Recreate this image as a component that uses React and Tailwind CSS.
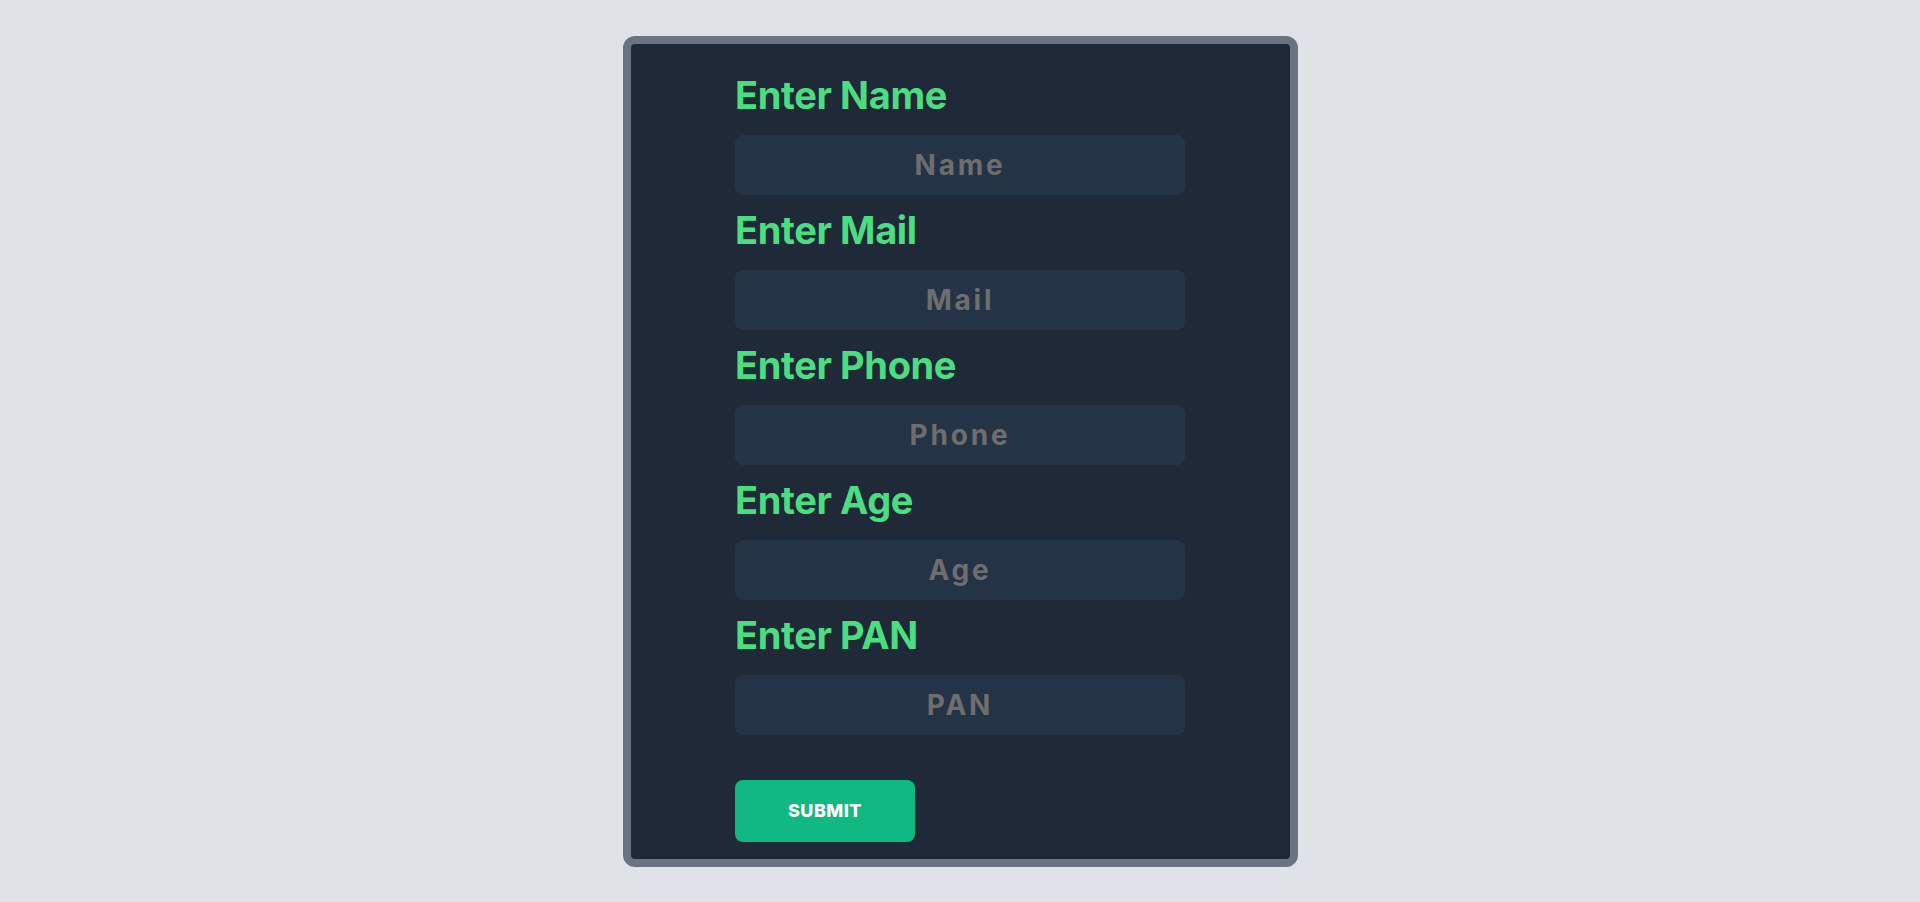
import React from "react";

const FIELDS = [
  { label: "Enter Name", placeholder: "Name" },
  { label: "Enter Mail", placeholder: "Mail" },
  { label: "Enter Phone", placeholder: "Phone" },
  { label: "Enter Age", placeholder: "Age" },
  { label: "Enter PAN", placeholder: "PAN" },
];

export default function App() {
  return (
    <div className="min-h-screen bg-[#dfe2e6] flex items-center justify-center font-['Inter',sans-serif]">
      <form
        className="w-[675px] border-8 border-[#6b7280] rounded-xl bg-[#1f2937] pt-[31px] pb-[17px]"
        onSubmit={(e) => e.preventDefault()}
      >
        <div className="w-[450px] mx-auto flex flex-col gap-[15px]">
          {FIELDS.map((f) => (
            <div key={f.label} className="flex flex-col">
              <label className="text-[38px] leading-[40px] font-bold text-[#4ade80] tracking-[-0.01em] mb-5">
                {f.label}
              </label>
              <input
                type="text"
                placeholder={f.placeholder}
                className="h-[60px] w-full rounded-lg bg-[#253347] text-center text-[28px] font-bold tracking-widest text-gray-300 placeholder:text-[#6e6e6e] outline-none"
              />
            </div>
          ))}
        </div>
        <div className="w-[450px] mx-auto mt-[45px]">
          <button
            type="submit"
            className="w-[180px] h-[62px] rounded-lg bg-[#10b981] text-white text-lg font-extrabold tracking-wide"
          >
            SUBMIT
          </button>
        </div>
      </form>
    </div>
  );
}
